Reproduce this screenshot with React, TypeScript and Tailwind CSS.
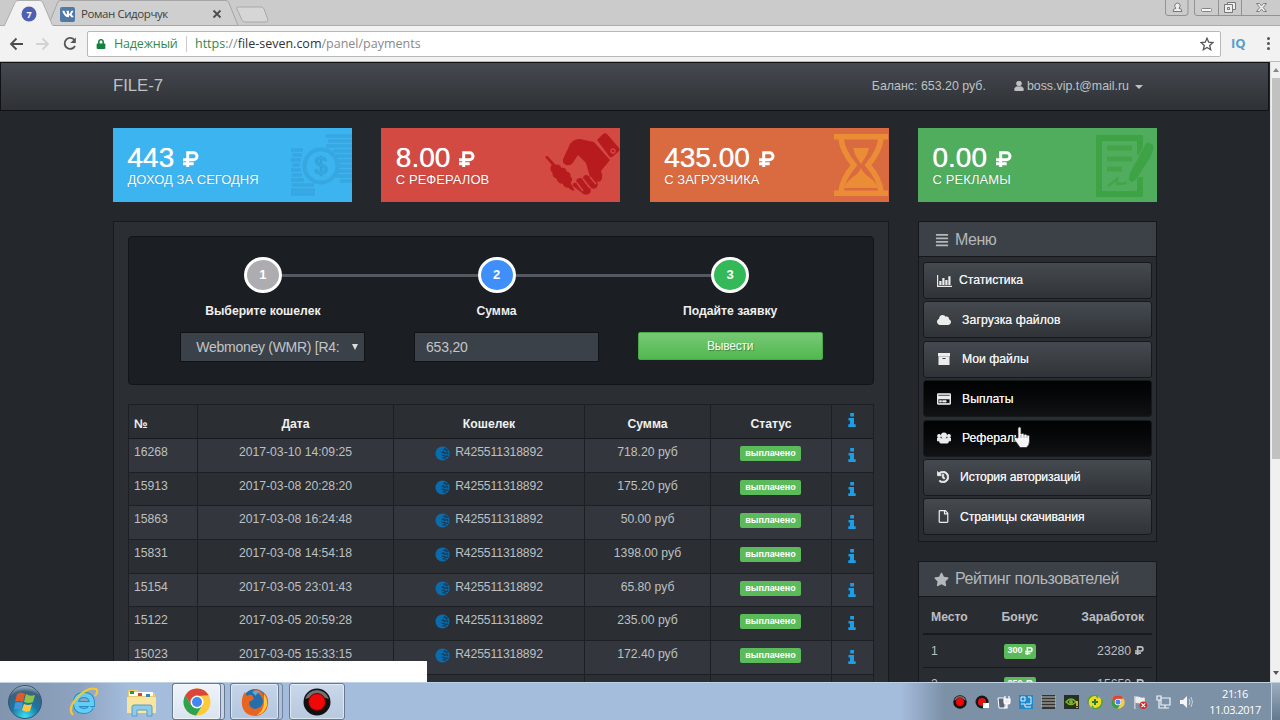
import React from "react";
import { FaAlignJustify, FaCloud, FaHistory, FaLock, FaRegCreditCard, FaRegFile, FaStar, FaUser, FaUsers, FaVk } from "react-icons/fa";

function Ruble({ className }: { className: string }) {
  return (
    <svg viewBox="0 0 15 15" className={className} fill="none" stroke="currentColor" strokeWidth="2.8">
      <path d="M4.400 15V1.600h5.400a3.300 3.300 0 0 1 0 6.700H0M0 12h10" />
    </svg>
  );
}

function InfoIcon() {
  return <svg viewBox="0 0 8 14" className="h-[14px] w-[8px]" fill="currentColor"><path d="M2.200 0h3.800v3.400H2.200ZM.5 5H6v6.300h1.700V14H.3v-2.700H2V7.600H.5Z" /></svg>;
}

function ArchiveIcon() {
  return <svg viewBox="0 0 12 12" className="ml-px size-[12px]" fill="currentColor"><path fillRule="evenodd" d="M0 0h12v3.200H0ZM.5 3.600h11V12H.5ZM4.500 5v1h3V5Z" /></svg>;
}

function ChartIcon() {
  return (
    <svg viewBox="0 0 15 12" className="h-[12px] w-[15px]" fill="none" stroke="currentColor">
      <path d="M.6 0v11.400H15" strokeWidth="1.200" />
      <path d="M3.400 10V6M6.400 10V3M9.400 10V5M12.400 10V1.200" strokeWidth="2.200" />
    </svg>
  );
}

function CoinsArt() {
  return (
    <svg viewBox="0 0 62 66" className="h-[66px] w-[62px]">
      <g fill="none" stroke="#36a7e1" strokeWidth="3.400">
        <path d="M36 3h26M38 8h24M36 13h26M43 18h19M46 23h16M47 28h15M48 33h14M47 38h15M46 43h16M50 48h12" />
        <path d="M1 17h12M2 22h10M1 27h10M2 32h8M1 37h10M2 42h10M1 47h13M2 52h22M1 57h24M1 61h24" />
        <circle cx="31" cy="33" r="16.500" strokeWidth="4" />
      </g>
      <text x="31" y="41" textAnchor="middle" fontSize="23" fill="#36a7e1" className="font-['Liberation_Sans',sans-serif]">$</text>
    </svg>
  );
}

function HandsArt() {
  return (
    <svg viewBox="0 0 76 64" className="h-[64px] w-[76px]" fill="#b81b1d">
      <path d="M53 7l6-6q2-1.500 4 0l12 14q1.500 2-1 4l-6 5q-2 1-3-1Z" />
      <path d="M50 9l16 18-9 11q2 4 1 8-2 4-5 2 2 5-1 7-3 2-6-1 2 5-1 7-5 2-8-2L29 53q-1-4 4-3-2-4 2-5 3 0 4 1 0-4 3-4 2 0 4 2L42 30l-8-8-4 6q-2 5-8 4-5-3-2-8 3-6 6-13 4-5 10-5Z" />
      <path d="M1 24l2.200-1.200 8.500 9q4-1 5.500 3 5-1 5.500 4 4 0 4 5 3 2 0 6l4 8q-4 0-6-3-5 0-6-4-5 0-6-5-5-2-4-6-4-3-1-8Z" />
      <path d="M46 44l6 7M39 46l7 9M33 50l6 8" stroke="#d24a42" strokeWidth="1.600" fill="none" />
      <circle cx="69" cy="18" r="2" fill="none" stroke="#d24a42" strokeWidth="1.300" />
    </svg>
  );
}

function HourglassArt() {
  return (
    <svg viewBox="0 0 54 62" className="h-[62px] w-[54px]" fill="#eb8c36">
      <path d="M0 0h54v5.500H0zM0 56.500h54V62H0z" />
      <path d="M7 4Q8 17 20 31 8 45 7 58M47 4Q46 17 34 31q12 14 13 27" fill="none" stroke="#eb8c36" strokeWidth="5.500" />
      <path d="M19 14h16q-1 5-4 10l-4 6-4-6q-3-5-4-10zM27 34q2 5 8 9 7 5 9 11H10q2-6 9-11 6-4 8-9z" />
    </svg>
  );
}

function NoteArt() {
  return (
    <svg viewBox="0 0 60 62" className="h-[62px] w-[60px]" fill="none" stroke="#3ea345">
      <path d="M44 20V3H3v56h41V42" strokeWidth="6" />
      <path d="M11 13h25M11 24h25M11 34h15" strokeWidth="5" opacity=".8" />
      <path d="M12 51l9-7v5l10-1" strokeWidth="2.500" opacity=".8" />
      <path d="M49 9q2-3 6-1t3 6L55 22 41 44l-9 7 1-12 13-24z" fill="#3ea345" stroke="#50ad5e" strokeWidth="1" />
      <path d="M32 51l1-6 4 3z" fill="#50ad5e" stroke="none" />
    </svg>
  );
}

const cards = [
  { value: "443", label: "ДОХОД ЗА СЕГОДНЯ", style: "bg-[#3cb4f0]", ls: "tracking-[0.030px]", art: <CoinsArt />, pos: "right-0 top-[5px]" },
  { value: "8.00", label: "С РЕФЕРАЛОВ", style: "bg-[#d24a42]", ls: "tracking-[0.050px]", art: <HandsArt />, pos: "right-0 top-[5px]" },
  { value: "435.00", label: "С ЗАГРУЗЧИКА", style: "bg-[#da6a40]", ls: "tracking-[0.050px]", art: <HourglassArt />, pos: "right-[1px] top-[6px]" },
  { value: "0.00", label: "С РЕКЛАМЫ", style: "bg-[#50ad5e]", ls: "tracking-[0.100px]", art: <NoteArt />, pos: "right-[1px] top-[7px]" },
];

const menu = [
  { label: "Статистика", icon: <ChartIcon />, pad: "pl-[21px]", active: false },
  { label: "Загрузка файлов", icon: <FaCloud className="size-[14px]" />, pad: "pl-[24px] tracking-[0.120px]", active: false },
  { label: "Мои файлы", icon: <ArchiveIcon />, pad: "pl-[24px]", active: false },
  { label: "Выплаты", icon: <FaRegCreditCard className="size-[14px] stroke-current stroke-[24]" />, pad: "pl-[24px]", active: true },
  { label: "Рефералы", icon: <FaUsers className="size-[14px] stroke-current stroke-[50]" />, pad: "pl-[24px]", active: true },
  { label: "История авторизаций", icon: <FaHistory className="size-[12px] stroke-current stroke-[30]" />, pad: "pl-[22px] tracking-[-0.100px]", active: false },
  { label: "Страницы скачивания", icon: <FaRegFile className="size-[13px]" />, pad: "pl-[22px] tracking-[-0.030px]", active: false },
];

const rows = [
  ["16268", "2017-03-10 14:09:25", "718.20 руб"],
  ["15913", "2017-03-08 20:28:20", "175.20 руб"],
  ["15863", "2017-03-08 16:24:48", "50.00 руб"],
  ["15831", "2017-03-08 14:54:18", "1398.00 руб"],
  ["15154", "2017-03-05 23:01:43", "65.80 руб"],
  ["15122", "2017-03-05 20:59:28", "235.00 руб"],
  ["15023", "2017-03-05 15:33:15", "172.40 руб"],
];

const steps = [
  { n: "1", title: "Выберите кошелек", color: "bg-[#adadb1]" },
  { n: "2", title: "Сумма", color: "bg-[#3f8ffb]" },
  { n: "3", title: "Подайте заявку", color: "bg-[#34b959]" },
];

function Browser() {
  return (
    <>
      <div className="relative h-[26px] shrink-0 bg-[#cbcbcb] font-['Open_Sans','Noto_Sans',sans-serif]">
        <svg className="absolute inset-0 h-[26px] w-[1280px]" viewBox="0 0 1280 26" fill="none">
          <path d="M0 25.5H1280" stroke="#adadad" />
          <path d="M48 26L58 1.5Q59 .5 61 .5H226Q228 .5 229 3L238 25.5H48" fill="#cfcfcf" stroke="#a6a6a6" />
          <path d="M4 26.5L15 2.5Q16 .5 18 .5H40Q42 .5 43 3L53 26.5Z" fill="#f2f2f2" stroke="#adadad" />
          <path d="M5 26.5H53" stroke="#f2f2f2" strokeWidth="2" />
          <path d="M238 7H261Q263 7 264 9L268 20Q268 22 266 22H245Q243 22 242 20L237 9Q236 7 238 7Z" fill="#d6d6d6" stroke="#a9a9a9" />
          <path d="M213.500 10.500L220.500 17.500M220.500 10.500L213.500 17.500" stroke="#4c4c4c" strokeWidth="1.800" />
          <circle cx="29" cy="14" r="7.500" fill="#4f5fb0" />
          <path d="M1165.500 0V13Q1165.500 15.500 1168 15.500H1185Q1188 15.500 1188 13V0M1194.500 0V13Q1194.500 15.500 1197 15.500H1280M1218.500 0V15M1241.500 0V15" stroke="#929292" />
          <path d="M1173 11.500q0-3 3-3.300-1.600-1-1.200-3Q1175.500 3 1177.500 3t2.600 2.200q.4 2-1.200 3 3 .3 3 3.300Z" stroke="#777" fill="#eee" />
          <rect x="1201.500" y="8.500" width="10" height="3" rx="1" fill="#f6f6f6" stroke="#828282" />
          <path d="M1227.500 4.500v-2h8v7h-2.500M1224.500 4.500h8v8h-8ZM1227.500 7.500h2v2h-2Z" fill="#eee" stroke="#777" />
          <path d="M1256.500 3.500h3l2 2.300 2-2.300h3l-3.300 4 3.300 4h-3l-2-2.300-2 2.300h-3l3.300-4Z" fill="#eee" stroke="#808080" />
        </svg>
        <div className="relative flex h-[26px] items-center pl-[26px] pt-[2px]">
          <span className="w-[6px] text-center text-[9px] font-bold leading-none text-white">7</span>
          <span className="ml-[28px] flex size-[15px] items-center justify-center rounded-[2px] bg-[#4f7aa6] text-white"><FaVk className="size-[12px]" /></span>
          <span className="ml-[6px] text-[11.500px] tracking-[-0.420px] text-[#404040]">Роман Сидорчук</span>
        </div>
      </div>
      <div className="flex h-[36px] shrink-0 items-center border-b border-[#b9b9b9] bg-[#f2f2f2] pl-[9px] font-['Open_Sans','Noto_Sans',sans-serif]">
        <svg className="h-[18px] w-[78px] shrink-0" viewBox="0 0 78 18" fill="none" strokeWidth="1.800">
          <path d="M14 9H2M7.500 3.500L2 9l5.500 5.500" stroke="#4d4d4d" />
          <path d="M27 9h12M33.500 3.500L39 9l-5.500 5.500" stroke="#d2d2d2" />
          <path d="M65.500 5a5.500 5.500 0 1 0 .5 6" stroke="#555" />
          <path d="M66.800 2.500V8h-5.500Z" fill="#555" />
        </svg>
        <div className="flex h-[26px] w-[1134px] items-center rounded-[2px] border border-[#b8b8b8] bg-white pl-[8px] pt-px text-[12.500px]">
          <FaLock className="size-[10px] text-[#15803f]" />
          <span className="ml-[8px] w-[65px] whitespace-nowrap tracking-[-0.180px] text-[#32894f]">Надежный</span>
          <span className="ml-[7px] h-[16px] w-px bg-[#ccc]" />
          <span className="ml-[8px] grow whitespace-nowrap text-[#898989]"><span className="text-[#2f884e]">https</span>://<span className="text-[#333]">file-seven.com</span>/panel/payments</span>
          <svg viewBox="0 0 14 14" className="mr-[6px] size-[14px]" fill="none" stroke="#555" strokeWidth="1.300"><path d="M7 1.200l1.700 4 4.300.4-3.300 2.800 1 4.300L7 10.400l-3.700 2.300 1-4.300L1 5.600l4.300-.4Z" /></svg>
        </div>
        <span className="ml-[10px] w-[20px] text-[13px] font-bold text-[#559fce]">IQ</span>
        <span className="ml-[16px] flex flex-col gap-[2px]"><i className="size-[3px] rounded-full bg-[#555]" /><i className="size-[3px] rounded-full bg-[#555]" /><i className="size-[3px] rounded-full bg-[#555]" /></span>
      </div>
    </>
  );
}

function Stepper() {
  return (
    <div className="h-[149px] rounded-[4px] border border-[#111418] bg-[#1b1e22] pl-[17px] pr-[26px] pt-[20px]">
      <div className="grid grid-cols-3">
        {steps.map((s, i) => (
          <div key={s.n} className="flex flex-col items-center">
            <div className="flex w-full items-center">
              <span className={"h-[3px] grow " + (i > 0 ? "bg-[#555860]" : "")} />
              <span className={"flex h-[36px] w-[38px] items-center justify-center rounded-[50%] border-[3px] border-white text-[13px] font-bold text-white " + s.color}>{s.n}</span>
              <span className={"h-[3px] grow " + (i < 2 ? "bg-[#555860]" : "")} />
            </div>
            <div className="mt-[9px] h-[18px] text-[12.200px] font-bold leading-[18px] text-[#eee]">{s.title}</div>
            {i === 0 && (
              <div className="ml-[20px] mt-[12px] flex h-[30px] w-[185px] items-center justify-between border border-[#111417] bg-[#3b4148] pl-[15px] pr-[6px] text-[14px] text-[#c2c5c7]">
                <span className="whitespace-nowrap tracking-[-0.280px]">Webmoney (WMR) [R4:</span>
                <svg viewBox="0 0 6 6" className="size-[6px]" fill="#ddd"><path d="M0 0h6L3 6Z" /></svg>
              </div>
            )}
            {i === 1 && <div className="ml-[20px] mt-[12px] flex h-[30px] w-[185px] items-center border border-[#111417] bg-[#3b4148] pl-[11px] text-[14px] tracking-[-0.200px] text-[#c2c5c7]">653,20</div>}
            {i === 2 && <button className="mt-[12px] h-[28px] w-[185px] rounded-[2px] border border-[#4aa84a] bg-linear-to-b from-[#77c975] to-[#51b84f] text-[12px] tracking-[-0.200px] text-[#f5fff5] [text-shadow:1px_1px_1px_rgba(0,0,0,.3)]">Вывести</button>}
          </div>
        ))}
      </div>
    </div>
  );
}

function Payments() {
  const line = "border-r border-[#1c2025] ";
  const gridCols = "grid grid-cols-[69px_196px_191px_126px_121px_42px] ";
  return (
    <div className="mt-[19px] border-l border-t border-[#1c2025] text-[12.200px] text-[#bdc0c2]">
      <div className={gridCols + "h-[34px] border-b border-[#16191d] font-bold text-[#f0f0f0] leading-[38px]"}>
        <div className={line + "pl-[5px]"}>№</div>
        <div className={line + "text-center"}>Дата</div>
        <div className={line + "text-center"}>Кошелек</div>
        <div className={line + "text-center"}>Сумма</div>
        <div className={line + "text-center"}>Статус</div>
        <div className={line + "flex justify-center pr-px pt-[8px] text-[#1b9de8]"}><InfoIcon /></div>
      </div>
      {rows.map((r, i) => (
        <div key={r[0]} className={gridCols + "h-[33.700px] border-b border-[#1c2025] leading-[27px] " + (i % 2 === 0 ? "bg-[#33373d]" : "bg-[#2b2f34]")}>
          <div className={line + "pl-[5px]"}>{r[0]}</div>
          <div className={line + "text-center"}>{r[1]}</div>
          <div className={line + "flex justify-center gap-[5px] tracking-[-0.120px]"}>
            <svg viewBox="0 0 16 16" className="mt-[7px] size-[15px]"><circle cx="8" cy="8" r="7.500" fill="#0b6cad" /><path d="M9 4l2-1 1 2 2-1M7 7l2-1 1 2 3-1 1 2M7 10l3 0 1 1 3 0M8 13l2-1 2 2" fill="none" stroke="#173f5e" strokeWidth="1.500" /></svg>
            R425511318892
          </div>
          <div className={line + "text-center"}>{r[2]}</div>
          <div className={line + "flex justify-center pr-[1px]"}><span className="mt-[7px] h-[15px] w-[61px] rounded-[2px] bg-[#5bbb5b] text-center text-[9px] font-bold leading-[15px] text-white">выплачено</span></div>
          <div className={line + "flex justify-center pr-px pt-[9px] text-[#1b9de8]"}><InfoIcon /></div>
        </div>
      ))}
      <div className={gridCols + "h-[33.700px] bg-[#2b2f34]"}>
        <div className={line} /><div className={line} /><div className={line} /><div className={line} /><div className={line} /><div className={line} />
      </div>
    </div>
  );
}

function Sidebar() {
  return (
    <aside className="flex w-[239px] flex-col gap-[19px]">
      <section className="h-[321px] border border-[#15181c] bg-[#292d32]">
        <h2 className="flex h-[35px] items-center border-b border-[#15181c] bg-[#3b4147] pl-[16px] pt-px text-[16px] tracking-[-0.500px] text-[#b5b8ba]"><FaAlignJustify className="mr-[6px] size-[14px]" />Меню</h2>
        <div className="flex flex-col gap-[2.400px] px-[4px] pt-[5px]">
          {menu.map((m) => (
            <a key={m.label} className={"flex h-[37px] items-center rounded-[3px] border border-[#171a1d] pl-[13px] text-[12.200px] text-[#ececec] [text-shadow:0_0_.6px_#fff] " + (m.active ? "bg-linear-to-b from-[#020303] to-[#101214]" : "bg-linear-to-b from-[#454a50] to-[#303438]")}>
              <span className="flex w-[15px] items-center justify-start">{m.icon}</span>
              <span className={m.pad + " -ml-[14px]"}>{m.label}</span>
            </a>
          ))}
        </div>
      </section>
      <section className="h-[150px] border border-[#15181c] bg-[#292d32] text-[12.200px] text-[#bbbec0]">
        <h2 className="flex h-[35px] items-center border-b border-[#15181c] bg-[#3b4147] pl-[15px] text-[16px] tracking-[-0.460px] text-[#b5b8ba]"><FaStar className="mr-[6px] size-[15px]" />Рейтинг пользователей</h2>
        <div className="mx-[4px] grid h-[38px] grid-cols-[58px_62px_1fr] items-center border-b-2 border-[#171a1e] px-[8px] pt-[4px] font-bold">
          <span>Место</span><span className="text-center">Бонус</span><span className="text-right">Заработок</span>
        </div>
        {[["1", "300", "23280"], ["2", "250", "15650"]].map((r) => (
          <div key={r[0]} className="mx-[4px] grid h-[33px] grid-cols-[58px_62px_1fr] items-center border-b border-[#171a1e] px-[8px]">
            <span>{r[0]}</span>
            <span className="mx-auto flex h-[15px] w-[32px] items-center justify-center gap-[2px] rounded-[2px] bg-[#5bbb5b] text-[9px] font-bold text-white">{r[1]}<Ruble className="size-[8px]" /></span>
            <span className="flex items-center justify-end gap-[4px]">{r[2]}<Ruble className="size-[9px]" /></span>
          </div>
        ))}
      </section>
    </aside>
  );
}

function Site() {
  return (
    <div className="relative flex h-[620px] shrink-0 overflow-hidden bg-[#24272b] font-['Liberation_Sans',Arial,sans-serif]">
      <main className="h-[620px] w-[1270px] overflow-hidden">
        <nav className="flex h-[49px] w-[1269px] items-center border border-[#101215] bg-linear-to-b from-[#454950] to-[#2e3236] pb-px pl-[112px] pr-[125px] text-[12.400px] text-[#bfc1c3]">
          <span className="grow text-[16.700px]">FILE-7</span>
          <span>Баланс: 653.20 руб.</span>
          <span className="ml-[28px] flex items-center gap-[3px]"><FaUser className="size-[10px] stroke-current stroke-[36]" />boss.vip.t@mail.ru<svg viewBox="0 0 8 4" className="ml-[3px] mt-[2px] h-[4px] w-[8px]" fill="currentColor"><path d="M0 0h8L4 4Z" /></svg></span>
        </nav>
        <div className="ml-[113px] mt-[17px] grid w-[1044px] grid-cols-4 gap-[29.300px]">
          {cards.map((c) => (
            <div key={c.label} className={"relative h-[74px] overflow-hidden px-[14.500px] pt-[15px] text-white [text-shadow:0_0_1px_rgba(0,0,0,.3)] " + c.style}>
              <div className={"absolute " + c.pos}>{c.art}</div>
              <div className="relative flex h-[29px] items-center text-[28px] leading-none [text-shadow:0_0_.7px_#fff]">{c.value}<Ruble className="ml-[9px] mt-[3px] size-[16px]" /></div>
              <div className={"relative whitespace-nowrap text-[13px] leading-[16px] " + c.ls}>{c.label}</div>
            </div>
          ))}
        </div>
        <div className="ml-[113px] mt-[19px] flex w-[1044px] items-start justify-between">
          <section className="h-[520px] w-[776px] border border-[#171a1e] bg-[#2b2f34] p-[14px]">
            <Stepper />
            <Payments />
          </section>
          <Sidebar />
        </div>
      </main>
      <div className="flex w-[10px] flex-col items-center border-l border-[#dedede] bg-[#f0f0f0]">
        <svg viewBox="0 0 6 4" className="my-[6px] h-[4px] w-[6px]" fill="#888"><path d="M0 4h6L3 0Z" /></svg>
        <div className="h-[381px] w-[8px] bg-[#c1c1c1]" />
        <svg viewBox="0 0 6 4" className="mb-[7px] mt-auto h-[4px] w-[6px]" fill="#555"><path d="M0 0h6L3 4Z" /></svg>
      </div>
      <svg viewBox="0 0 18 22" className="absolute left-[1013px] top-[364px] h-[22px] w-[18px]"><path d="M5 12V2.500a1.500 1.500 0 0 1 3 0V8q2-1.500 3 .5 2-1 3 .8 2-.8 2.500 1.200V15q0 4-3 6.500H7Q4 17 1.500 14q-1-2.500 1-2.500Z" fill="#f5f5f5" stroke="#222" strokeWidth=".7" /><path d="M8 9v3M11 9v3M14 10v2" stroke="#aaa" /></svg>
      <div className="absolute bottom-0 left-0 h-[21px] w-[427px] bg-white" />
    </div>
  );
}

function ChromeLogo({ className }: { className: string }) {
  return (
    <svg viewBox="0 0 28 28" className={className}>
      <circle cx="14" cy="14" r="13.500" fill="#fbcb3d" />
      <path d="M2.300 7.200A13.500 13.500 0 0 1 25.700 7.200L14 8l-6 9Z" fill="#dc4638" />
      <path d="M2.300 7.200A13.500 13.500 0 0 0 13 27.500L19.500 17 8 17Z" fill="#2da352" />
      <circle cx="14" cy="14" r="6.500" fill="#fff" /><circle cx="14" cy="14" r="5" fill="#4387f2" />
    </svg>
  );
}

function RecordLogo({ className }: { className: string }) {
  return <svg viewBox="0 0 28 28" className={className}><circle cx="14" cy="14" r="13.500" fill="#111" /><path d="M2 11a12.500 12.500 0 0 1 24 0q-12-5-24 0Z" fill="#707070" /><circle cx="14" cy="14" r="8.500" fill="#f00707" stroke="#6b0505" /></svg>;
}

function Taskbar() {
  const tab = "flex h-[37px] items-center justify-center rounded-[3px] border border-[#68798f] shadow-[inset_0_0_1px_1px_rgba(255,255,255,.55)] ";
  return (
    <footer className="flex h-[38px] shrink-0 items-center border-t border-[#bfd1e4] bg-[linear-gradient(90deg,#8295ae_0,#8ea3c0_80px,#a5bddd_130px,#a5bddd_900px,#7c90a6_945px,#7c90a6_100%)]">
      <svg viewBox="0 0 36 36" className="ml-[7px] size-[36px] shrink-0">
        <defs><radialGradient id="orb" cx=".5" cy=".95" r=".95"><stop stopColor="#3fe1f2" /><stop offset=".45" stopColor="#1877a6" /><stop offset=".8" stopColor="#3d607c" /><stop offset="1" stopColor="#a5bbc9" /></radialGradient></defs>
        <circle cx="18" cy="18" r="16.500" fill="url(#orb)" stroke="#345873" />
        <path d="M10 10q4-3 8 0l-2 8q-4-2-8 0Z" fill="#e2592c" /><path d="M19 10q4 3 9 1l-2 7q-4 2-9 0Z" fill="#8cc348" /><path d="M8 19q4-2 8 0l-2 7q-4-2-7 0Z" fill="#4497d5" /><path d="M17 20q4 2 8 0l-2 7q-4 2-8-1Z" fill="#fac940" />
      </svg>
      <svg viewBox="0 0 30 30" className="ml-[26px] size-[30px] shrink-0"><path d="M22 20q-2 4-7 4-8 0-8-8t8-8q8 0 8 9H8" fill="none" stroke="#258ec5" strokeWidth="6" /><path d="M22 20q-2 4-7 4-8 0-8-8t8-8q8 0 8 9H8" fill="none" stroke="#63cdf3" strokeWidth="4.200" /><path d="M4 28Q-2 22 8 11T27 2Q30 4 26 9" fill="none" stroke="#f3c933" strokeWidth="2.200" /></svg>
      <svg viewBox="0 0 32 30" className="ml-[27px] h-[30px] w-[32px] shrink-0"><path d="M2 3h10l2 3h15v20H2Z" fill="#eacb6d" /><path d="M3 5h24v4H3Z" fill="#fff" /><path d="M4 4h4v3H4Z" fill="#319345" /><path d="M12 6h4v3h-4Z" fill="#cc4931" /><path d="M20 7h4v3h-4Z" fill="#3687bd" /><path d="M1 10h29v16H1Z" fill="#f7e5a0" /><path d="M6 29V20q0-2 2-2h16q2 0 2 2v9h-5v-6H11v6Z" fill="#8ccbeb" stroke="#5a9cc4" /></svg>
      <div className="ml-[14px] flex h-[37px] w-[53px] rounded-[3px] border border-[#68798f] bg-[#c8d4e5]"><div className={tab + "-ml-px -mt-px w-[49px] bg-linear-to-b from-[#eff4fa] to-[#d9e3f0]"}><ChromeLogo className="size-[28px]" /></div></div>
      <div className="ml-[5px] flex h-[37px] w-[53px] rounded-[3px] border border-[#71849d] bg-[#adc1dc]"><div className={tab + "-ml-px -mt-px w-[49px] bg-linear-to-b from-[#c5d5e9] to-[#b2c6e0]"}>
        <svg viewBox="0 0 30 30" className="size-[30px]"><circle cx="15" cy="14" r="12" fill="#246eae" /><path d="M13 3q8-2 11 6 0-2-1-4 6 4 5 12-1 10-12 12Q4 29 2 18 1 10 5 5l2 4q3-2 5-1l2 4-5 3q0 6 6 7 7-1 8-7 0-5-4-8Z" fill="#e76523" /><path d="M24 7q5 7 2 14-3 6-9 7 7-5 7-12Z" fill="#fac83a" /><path d="M12 5q5-3 8 0-4 1-4 4Z" fill="#5aaddd" /></svg>
      </div></div>
      <div className={tab + "ml-[6px] w-[56px] bg-linear-to-b from-[#c9d7e9] to-[#b7c9df]"}><RecordLogo className="size-[28px]" /></div>
      <div className="ml-auto flex items-center gap-[8.000px] pt-[1px]">
        <RecordLogo className="size-[14px]" />
        <svg viewBox="0 0 14 14" className="size-[14px]"><circle cx="7" cy="7" r="6.500" fill="#181818" /><circle cx="7" cy="7" r="4" fill="#df1111" /><path d="M8 8h6v5H8Z" fill="#fff" /></svg>
        <svg viewBox="0 0 14 14" className="size-[14px]"><path d="M1 3h7v10H2Z" fill="#596579" stroke="#fff" /><path d="M8 1v3m4-3v3M7 4h6v3q0 2-3 2-3 0-3-2Zm3 5v4H7" fill="#eee" stroke="#fff" strokeWidth="1.200" /></svg>
        <svg viewBox="0 0 14 14" className="size-[14px]"><path d="M0 0h14v14H0Z" fill="#2188ca" /><path d="M2 2h4v4H2Zm7 0h3v7H7M2 9h4v3h6" fill="none" stroke="#e6f6ff" /></svg>
        <svg viewBox="0 0 15 14" className="h-[14px] w-[15px]"><path d="M1 0h13v14H1Z" fill="#333" /><path d="M0 2h15M0 5h15M0 8h15M0 11h15" stroke="#c7c7bd" /></svg>
        <svg viewBox="0 0 15 14" className="h-[14px] w-[15px]"><path d="M0 0h15v14H0Z" fill="#283021" /><path d="M2 7q5-6 10 0-5 5-10 0Z" fill="none" stroke="#79b62b" strokeWidth="1.500" /><circle cx="7" cy="7" r="2" fill="#79b62b" /><path d="M13 6v5m0 1v1" stroke="#ffdf22" strokeWidth="1.500" /></svg>
        <svg viewBox="0 0 16 14" className="h-[14px] w-[16px]"><circle cx="8" cy="7" r="6.500" fill="#eeda25" /><path d="M1 9Q0 1 9 0l2 3M15 5q1 8-8 9l-2-3" stroke="#50a335" strokeWidth="1.500" fill="none" /><path d="M8 4v6M5 7h6" stroke="#287b2c" strokeWidth="2" /></svg>
        <ChromeLogo className="size-[14px]" />
        <svg viewBox="0 0 16 14" className="size-[15px]"><path d="M2 0v14M3 1q3 0 5 1t4 0v6q-2 1-4 0T3 7Z" fill="#eee" stroke="#eee" /><circle cx="11" cy="10" r="4" fill="#d42a27" /><path d="M9 8l4 4m0-4l-4 4" stroke="#fff" strokeWidth="1.200" /></svg>
        <svg viewBox="0 0 15 14" className="h-[14px] w-[15px]" fill="none" stroke="#eef3f8" strokeWidth="1.200"><path d="M5 3h9v7H5ZM1 1h4v4H1ZM3 5v8h10M9 10v3" /></svg>
        <svg viewBox="0 0 14 14" className="size-[14px]"><path d="M1 5h3l4-4v12L4 9H1Z" fill="#f3f7fb" /><path d="M10 4q2 3 0 6m2-8q3 5 0 10" stroke="#c9d4df" fill="none" /></svg>
      </div>
      <div className="ml-[15px] w-[54px] text-center font-['Open_Sans','Noto_Sans',sans-serif] text-[11px] leading-[16px] tracking-[-0.450px] text-white">21:16<br />11.03.2017</div>
      <div className="ml-[9px] h-[37px] w-[9px] border-l border-[#c2cedb] bg-linear-to-b from-[#9dadbe] to-[#637991]" />
    </footer>
  );
}

export default function App() {
  return (
    <div className="flex h-[720px] w-[1280px] flex-col overflow-hidden">
      <Browser />
      <Site />
      <Taskbar />
    </div>
  );
}
